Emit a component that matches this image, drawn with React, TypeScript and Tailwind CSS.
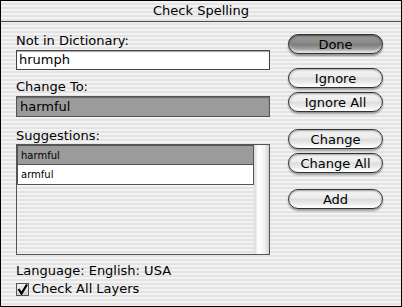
import React from "react";

const stripes =
  "bg-[repeating-linear-gradient(to_bottom,#f3f3f3_0px,#f3f3f3_2px,#e3e3e3_2px,#e3e3e3_4px)]";

function AquaButton({ label, primary, className = "" }: { label: string; primary?: boolean; className?: string }) {
  return (
    <div
      className={
        "h-[20px] w-[95px] rounded-full border border-[#333] flex items-center justify-center text-[13px] leading-none text-black " +
        (primary
          ? "bg-[linear-gradient(to_bottom,#9a9a9a_0%,#8a8a8a_45%,#7a7a7a_50%,#9c9c9c_75%,#d6d6d6_100%)] shadow-[0_2px_2px_rgba(0,0,0,0.4),inset_0_1px_2px_rgba(0,0,0,0.5),inset_0_-2px_2px_rgba(255,255,255,0.5)] "
          : "bg-[linear-gradient(to_bottom,#f6f6f6_0%,#ebebeb_45%,#dcdcdc_50%,#ebebeb_75%,#ffffff_100%)] shadow-[0_2px_2px_rgba(0,0,0,0.35),inset_0_1px_2px_rgba(0,0,0,0.35),inset_0_-2px_2px_rgba(255,255,255,0.8)] ") +
        className
      }
      style={{ fontFamily: '"DejaVu Sans", sans-serif' }}
    >
      {label}
    </div>
  );
}

export default function App() {
  const font = { fontFamily: '"DejaVu Sans", sans-serif' };
  return (
    <div className="w-[402px] h-[307px] bg-black p-px">
      <div className={"w-full h-full flex flex-col " + stripes} style={font}>
        <div className="h-[21px] border-b border-[#4a4a4a] flex items-center justify-center text-[13px] text-black">
          Check Spelling
        </div>
        <div className="flex flex-1">
          <div className="w-[254px] ml-[15px] flex flex-col">
            <div className="mt-[11px] text-[13px] leading-[16px] text-black">Not in Dictionary:</div>
            <div className="mt-px h-[20px] border border-[#444] bg-white shadow-[inset_0_1px_1px_rgba(0,0,0,0.35)] flex items-center pl-[2px] text-[13px] text-black">
              hrumph
            </div>
            <div className="mt-[9px] text-[13px] leading-[16px] text-black">Change To:</div>
            <div className="mt-[1px] h-[21px] border border-[#555] bg-[#9b9b9b] shadow-[inset_0_1px_1px_rgba(0,0,0,0.35)] flex items-center pl-[3px] text-[13px] text-black">
              harmful
            </div>
            <div className="mt-[11px] text-[13px] leading-[16px] text-black">Suggestions:</div>
            <div className="h-[111px] border border-[#555] flex">
              <div className="flex-1 flex flex-col">
                <div className="h-[20px] border border-[#555] bg-[#9b9b9b] flex items-center pl-[3px] text-[10px] text-black">
                  harmful
                </div>
                <div className="h-[20px] border border-t-0 border-[#555] bg-white flex items-center pl-[3px] text-[10px] text-black">
                  armful
                </div>
              </div>
              <div className="w-[15px] bg-[linear-gradient(to_right,#d8d8d8,#ffffff_30%,#f2f2f2_70%,#d0d0d0)]" />
            </div>
            <div className="mt-[8px] text-[13px] leading-[16px] text-black">Language: English: USA</div>
            <div className="mt-[2px] flex items-center gap-[3px] text-[13px] leading-[16px] text-black">
              <div className="w-[13px] h-[13px] border border-[#555] bg-[linear-gradient(to_bottom,#f4f4f4,#cfcfcf)] flex items-center justify-center">
                <svg width="11" height="11" viewBox="0 0 11 11">
                  <path d="M1.5 5 L4.5 9.5 L10 0.5" fill="none" stroke="#000" strokeWidth="2.2" />
                </svg>
              </div>
              Check All Layers
            </div>
          </div>
          <div className="ml-[18px] flex flex-col">
            <AquaButton label="Done" primary className="mt-[12px]" />
            <AquaButton label="Ignore" className="mt-[14px]" />
            <AquaButton label="Ignore All" className="mt-[4px]" />
            <AquaButton label="Change" className="mt-[17px]" />
            <AquaButton label="Change All" className="mt-[4px]" />
            <AquaButton label="Add" className="mt-[16px]" />
          </div>
        </div>
      </div>
    </div>
  );
}
